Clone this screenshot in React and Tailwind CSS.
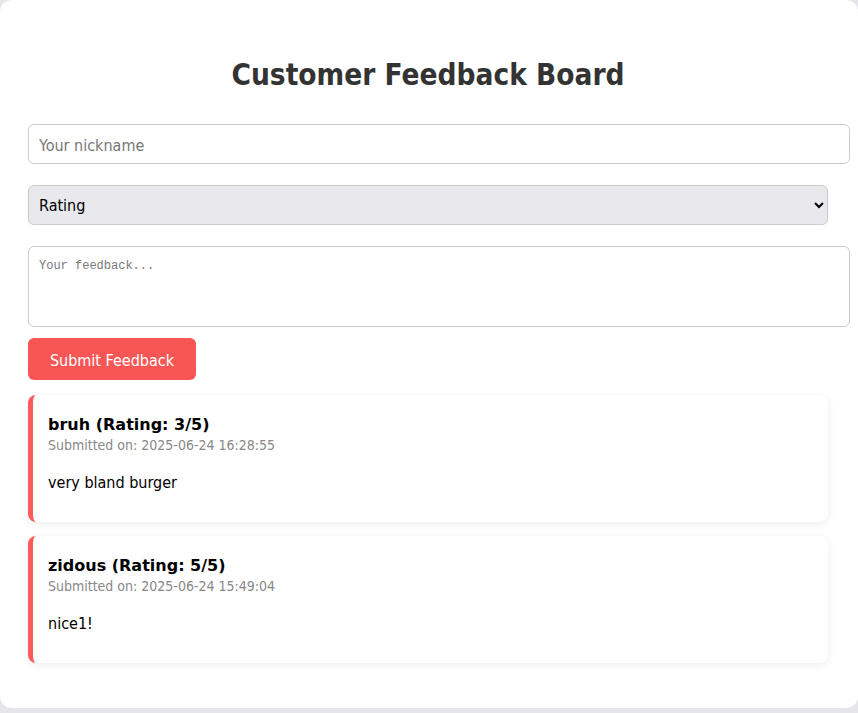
export default function App() {
  const items = [
    { name: "bruh", rating: 3, date: "2025-06-24 16:28:55", text: "very bland burger" },
    { name: "zidous", rating: 5, date: "2025-06-24 15:49:04", text: "nice1!" },
  ];
  const font = { fontFamily: '"DejaVu Sans Condensed", Tahoma, "Liberation Sans", sans-serif' };
  const bold = { fontFamily: '"DejaVu Sans", Tahoma, "Liberation Sans", sans-serif' };
  return (
    <div className="min-h-[713px] w-[858px] bg-[#e6e6ea]">
      <div
        className="h-[708px] w-[858px] rounded-xl bg-white pl-[28px] pr-[30px] pt-[58px] text-[#222]"
        style={font}
      >
        <h1 className="text-center text-[29.5px] font-bold leading-[34px] text-[#333]">
          Customer Feedback Board
        </h1>
        <div className="mt-[32px] w-[800px]">
          <input
            className="block h-[40px] w-[822px] rounded-md border border-[#ccc] px-[10px] pt-[2px] text-[16px] placeholder:text-[#777] outline-none"
            placeholder="Your nickname"
            style={font}
          />
          <select
            className="mt-[21px] block h-[40px] w-[800px] rounded-md border border-[#ccc] bg-[#e9e9ed] px-[6px] text-[16px] text-black"
            style={font}
            defaultValue=""
          >
            <option value="">Rating</option>
          </select>
          <textarea
            className="mt-[21px] block h-[81px] w-[822px] resize-none rounded-md border border-[#ccc] px-[10px] py-[10px] text-[12px] font-['Liberation_Mono',monospace] placeholder:text-[#777] outline-none"
            placeholder="Your feedback..."
          />
          <button
            className="mt-[11px] h-[42px] w-[168px] rounded-md bg-[#f85555] pt-[3px] text-[16px] text-white"
            style={font}
          >
            Submit Feedback
          </button>
          <div className="mt-[15px] flex flex-col gap-[14px]">
            {items.map((it) => (
              <div
                key={it.name}
                className="h-[127px] w-[800px] rounded-lg border-l-[5px] border-[#ff5a5a] bg-white pl-[15px] pr-[15px] pt-[20px] shadow-[0_2px_8px_rgba(0,0,0,0.07)]"
              >
                <div className="text-[16px] font-bold leading-[19px] text-black" style={bold}>
                  {it.name} (Rating: {it.rating}/5)
                </div>
                <div className="mt-[3px] text-[14px] leading-[17px] text-[#888]">
                  Submitted on: {it.date}
                </div>
                <p className="mt-[19px] text-[16px] leading-[19px] text-black">{it.text}</p>
              </div>
            ))}
          </div>
        </div>
      </div>
    </div>
  );
}
